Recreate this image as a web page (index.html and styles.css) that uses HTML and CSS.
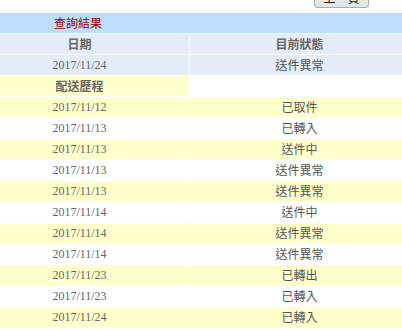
FILE: index.html
```html
<!DOCTYPE html>
<html>
<head>
<meta charset="utf-8">
<link rel="stylesheet" href="styles.css">
</head>
<body>
<div class="topbar"><button class="back">上一頁</button></div>
<table class="result">
  <tr class="title"><td colspan="2">查詢結果</td></tr>
  <tr class="head"><th>日期</th><th>目前狀態</th></tr>
  <tr class="current"><td class="date">2017/11/24</td><td>送件異常</td></tr>
  <tr class="section"><td class="sec-label">配送歷程</td><td class="blank"></td></tr>
  <tr class="odd"><td class="date">2017/11/12</td><td>已取件</td></tr>
  <tr class="even"><td class="date">2017/11/13</td><td>已轉入</td></tr>
  <tr class="odd"><td class="date">2017/11/13</td><td>送件中</td></tr>
  <tr class="even"><td class="date">2017/11/13</td><td>送件異常</td></tr>
  <tr class="odd"><td class="date">2017/11/13</td><td>送件異常</td></tr>
  <tr class="even"><td class="date">2017/11/14</td><td>送件中</td></tr>
  <tr class="odd"><td class="date">2017/11/14</td><td>送件異常</td></tr>
  <tr class="even"><td class="date">2017/11/14</td><td>送件異常</td></tr>
  <tr class="odd"><td class="date">2017/11/23</td><td>已轉出</td></tr>
  <tr class="even"><td class="date">2017/11/23</td><td>已轉入</td></tr>
  <tr class="odd"><td class="date">2017/11/24</td><td>已轉入</td></tr>
</table>
</body>
</html>
```
FILE: styles.css
```css
html, body {
  margin: 0;
  padding: 0;
  overflow: hidden;
  background: #fff;
}
body {
  font-family: "Noto Sans CJK TC", "Noto Sans", sans-serif;
  font-size: 12px;
  color: #555;
}
.topbar {
  height: 12px;
  text-align: right;
  padding-right: 33px;
}
.back {
  margin-top: -14px;
  width: 55px;
  height: 22px;
  border: 1px solid #adadad;
  border-radius: 3px;
  background: linear-gradient(#f2f2f2, #e3e3e3);
  font-family: "Noto Sans CJK TC", sans-serif;
  font-size: 12px;
  color: #222;
  padding: 0;
  vertical-align: top;
}
.result {
  margin-left: -31px;
  width: 441px;
  border-collapse: separate;
  border-spacing: 1px;
  table-layout: fixed;
}
.result td, .result th {
  height: 20px;
  padding: 0;
  text-align: center;
  line-height: 20px;
}
.result th:first-child, .result td:first-child {
  width: 218px;
}
.title td {
  background: #bbdff8;
  text-align: left;
  padding-left: 84px;
  color: #a00000;
  font-size: 12px;
}
.head th {
  background: #e4edf7;
  color: #666;
  font-weight: bold;
}
.current td {
  background: #e4edf7;
}
.section .sec-label {
  background: #ffffcc;
  font-weight: bold;
  color: #666;
}
.section .blank {
  background: #fff;
}
.odd td {
  background: #ffffcc;
}
.even td {
  background: #fff;
}
.date {
  font-family: "Liberation Serif", serif;
  font-size: 12px;
  color: #666;
}
```
